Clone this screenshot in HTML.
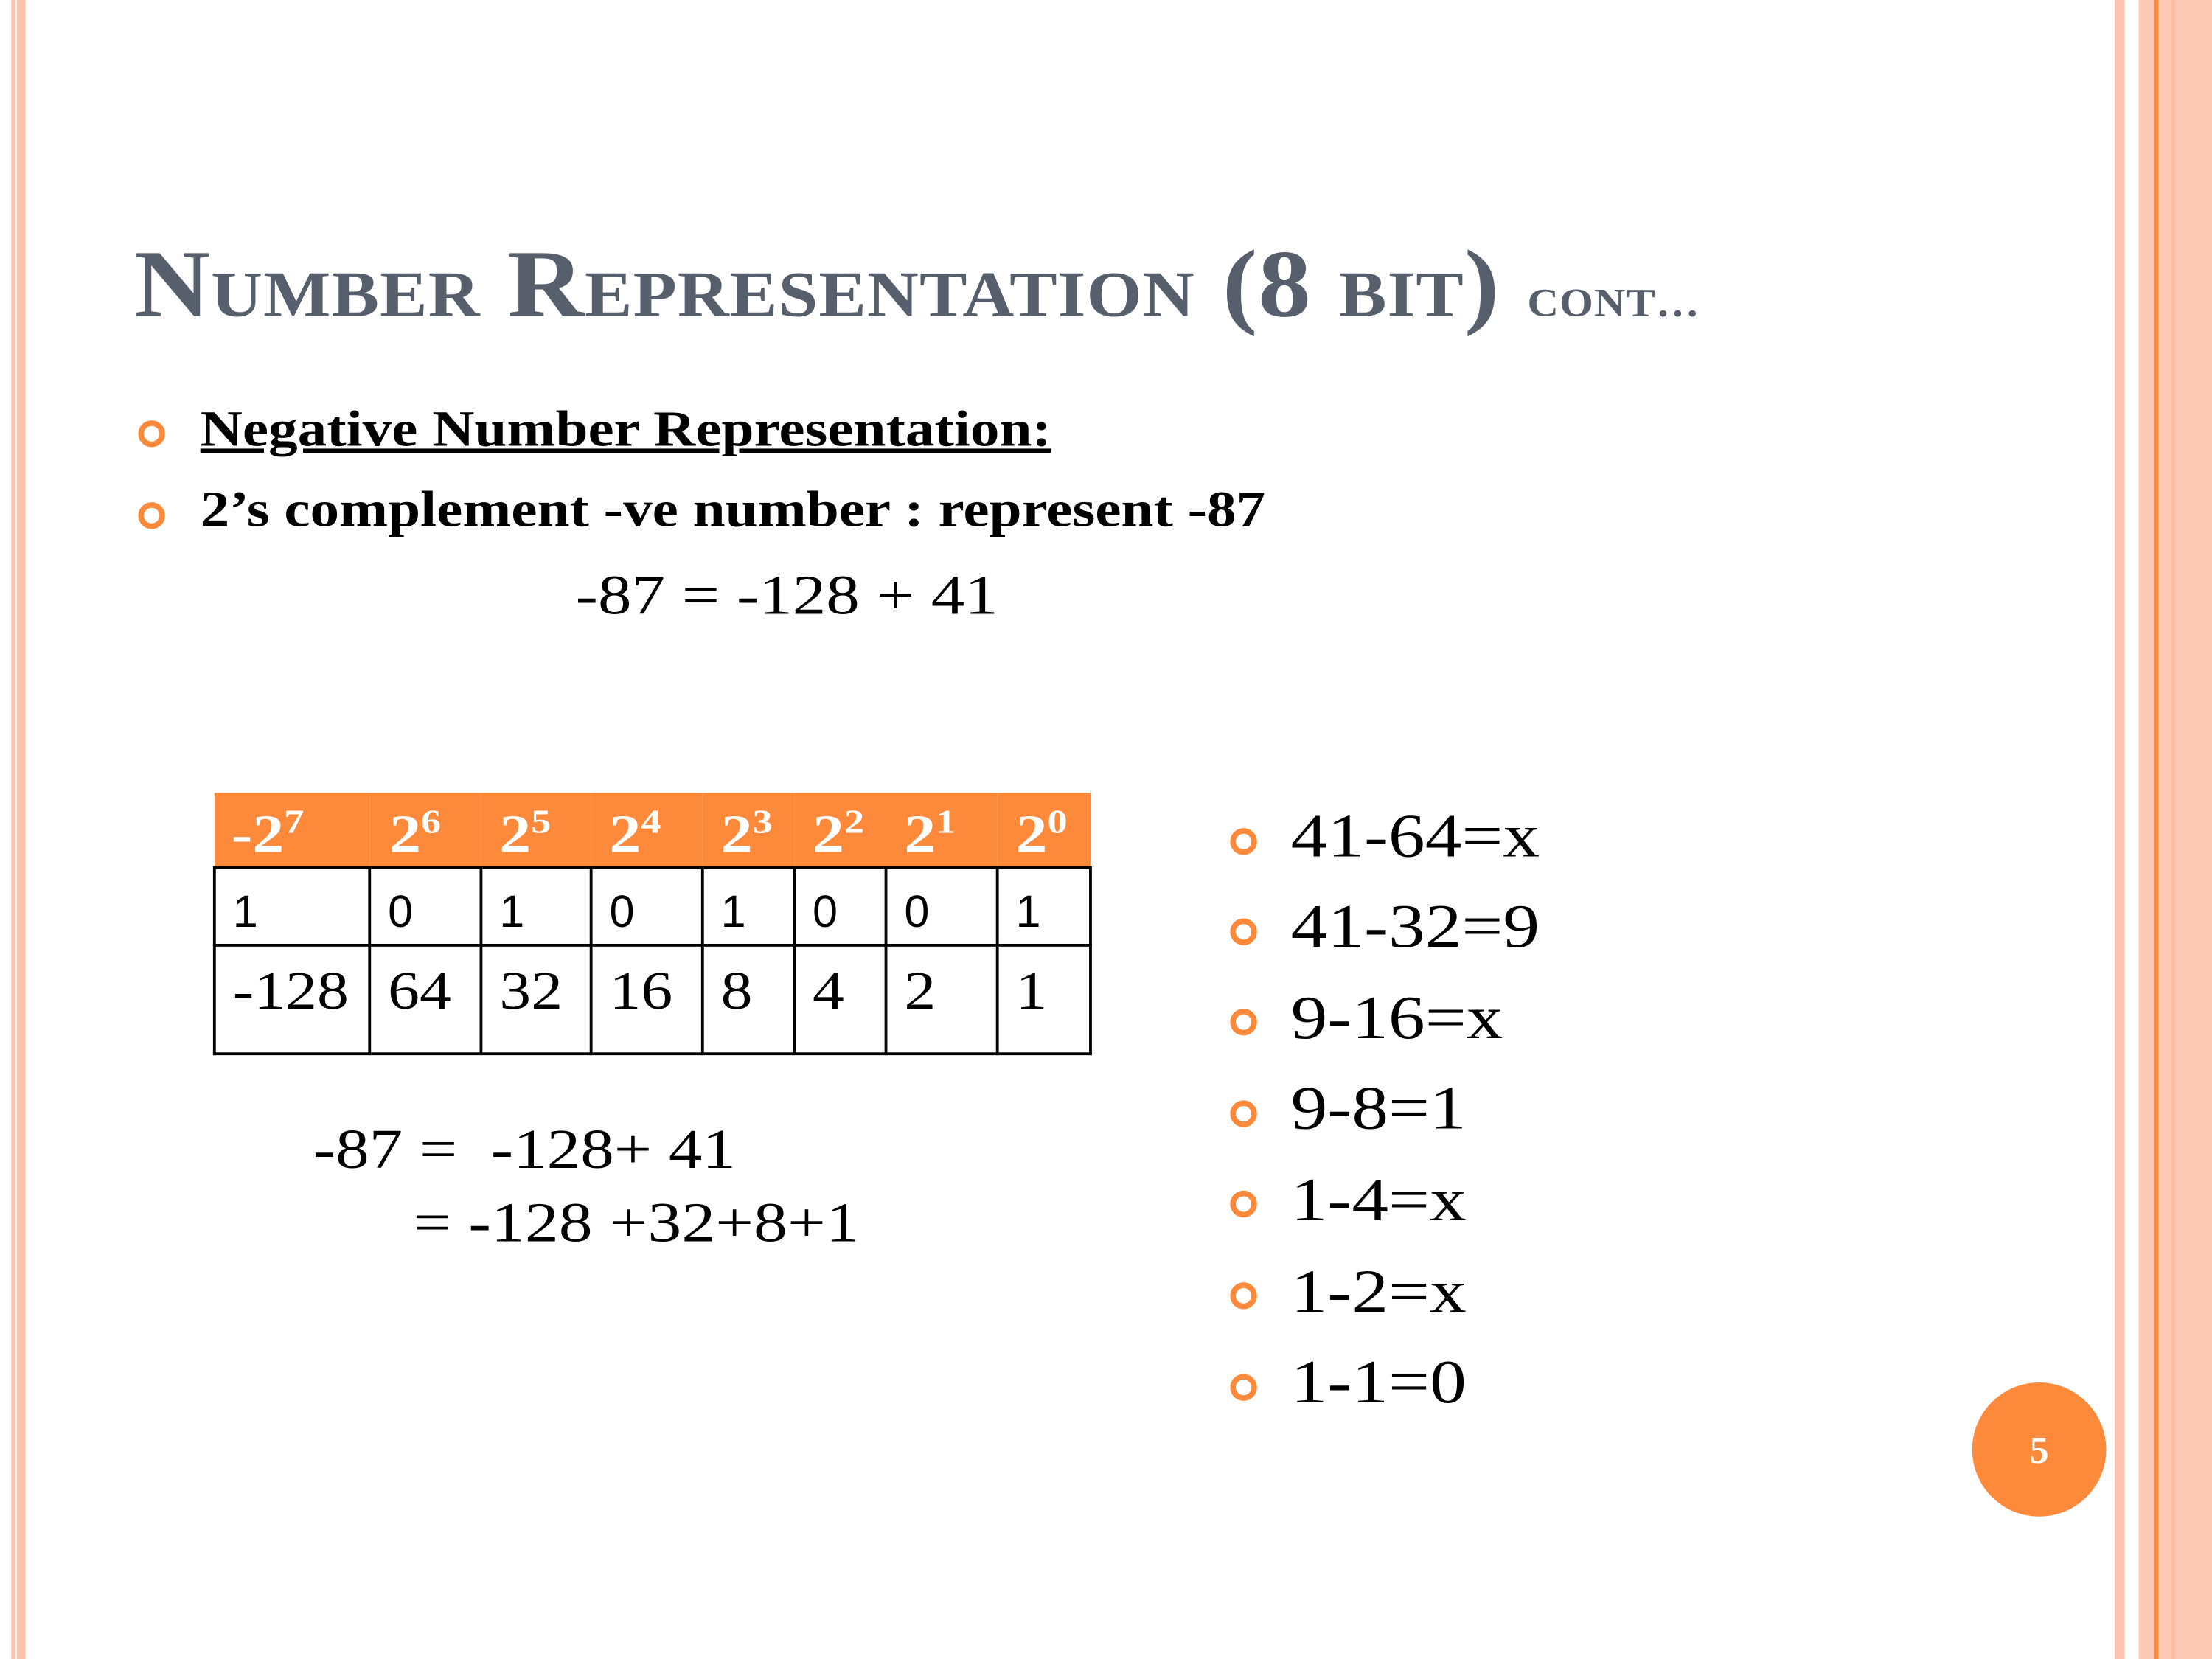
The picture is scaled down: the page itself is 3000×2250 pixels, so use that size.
<!DOCTYPE html>
<html><head><meta charset="utf-8"><style>
html,body{margin:0;padding:0;background:#fff;overflow:hidden;width:3000px;height:2250px}
#s{position:absolute;left:0;top:0;width:1568px;height:1176px;transform:scale(1.91327);transform-origin:0 0;font-family:"Liberation Serif",serif}
.a{position:absolute}
.t{position:absolute;white-space:nowrap;line-height:1;transform-origin:0 0}
.ring{position:absolute;width:11px;height:11px;border:4px solid #fd8a3b;border-radius:50%}
td{border:2px solid #000;padding:0 0 0 12px;vertical-align:middle;overflow:visible;white-space:nowrap}
.w{display:inline-block;transform:scaleX(1.18);transform-origin:0 0}
</style></head><body><div id="s">
<div class="a" style="left:8px;top:0;width:3px;height:1176px;background:#fdc1ab"></div>
<div class="a" style="left:12px;top:0;width:6px;height:1176px;background:#fdc1ab"></div>
<div class="a" style="left:1499px;top:0;width:7px;height:1176px;background:#fdc5b0"></div>
<div class="a" style="left:1516px;top:0;width:52px;height:1176px;background:#fdcab6"></div>
<div class="a" style="left:1527px;top:0;width:2.5px;height:1176px;background:#fd8a3b"></div>
<div class="a" style="left:1539px;top:0;width:3px;height:1176px;background:#fdbb9f"></div>

<div class="t" style="left:95px;top:167px;color:#575f6d;font-weight:bold;font-size:68px;letter-spacing:0.5px;transform:scaleX(1.1)">N<span style="font-size:46px">UMBER</span> R<span style="font-size:46px">EPRESENTATION</span> (8 <span style="font-size:46px">BIT</span>) <span style="font-size:28px">CONT…</span></div>

<div class="ring" style="left:98px;top:298px"></div>
<div class="ring" style="left:98px;top:356px"></div>
<div class="t" style="left:142px;top:286px;font-size:36px;font-weight:bold;text-decoration:underline;transform:scaleX(1.15)">Negative Number Representation:</div>
<div class="t" style="left:142px;top:343px;font-size:36px;font-weight:bold;transform:scaleX(1.15)">2’s complement -ve number : represent -87</div>
<div class="t" style="left:408px;top:402px;font-size:40px;transform:scaleX(1.19)">-87 = -128 + 41</div>

<table class="a" style="left:151px;top:562px;border-collapse:collapse;width:621px;table-layout:fixed;font-size:34px">
<colgroup><col style="width:110px"><col style="width:79px"><col style="width:78px"><col style="width:79px"><col style="width:65px"><col style="width:65px"><col style="width:79px"><col style="width:66px"></colgroup>
<tr style="height:52px;background:#fd8a3b;color:#fff;font-weight:bold;font-size:38px">
<td style="border:none;border-bottom:2px solid #000;padding-top:8px"><span class="w">-2<sup style="font-size:24px">7</sup></span></td>
<td style="border:none;border-bottom:2px solid #000;padding-left:14px;padding-top:8px"><span class="w">2<sup style="font-size:24px">6</sup></span></td>
<td style="border:none;border-bottom:2px solid #000;padding-left:13px;padding-top:8px"><span class="w">2<sup style="font-size:24px">5</sup></span></td>
<td style="border:none;border-bottom:2px solid #000;padding-left:13px;padding-top:8px"><span class="w">2<sup style="font-size:24px">4</sup></span></td>
<td style="border:none;border-bottom:2px solid #000;padding-left:13px;padding-top:8px"><span class="w">2<sup style="font-size:24px">3</sup></span></td>
<td style="border:none;border-bottom:2px solid #000;padding-left:13px;padding-top:8px"><span class="w">2<sup style="font-size:24px">2</sup></span></td>
<td style="border:none;border-bottom:2px solid #000;padding-left:13px;padding-top:8px"><span class="w">2<sup style="font-size:24px">1</sup></span></td>
<td style="border:none;border-bottom:2px solid #000;padding-left:13px;padding-top:8px"><span class="w">2<sup style="font-size:24px">0</sup></span></td></tr>
<tr style="height:55px;font-family:'Liberation Sans',sans-serif;font-size:32px"><td style="padding-top:8px">1</td><td style="padding-top:8px">0</td><td style="padding-top:8px">1</td><td style="padding-top:8px">0</td><td style="padding-top:8px">1</td><td style="padding-top:8px">0</td><td style="padding-top:8px">0</td><td style="padding-top:8px">1</td></tr>
<tr style="height:77px;font-size:38px"><td style="vertical-align:top;padding-top:10px"><span class="w">-128</span></td><td style="vertical-align:top;padding-top:10px"><span class="w">64</span></td><td style="vertical-align:top;padding-top:10px"><span class="w">32</span></td><td style="vertical-align:top;padding-top:10px"><span class="w">16</span></td><td style="vertical-align:top;padding-top:10px"><span class="w">8</span></td><td style="vertical-align:top;padding-top:10px"><span class="w">4</span></td><td style="vertical-align:top;padding-top:10px"><span class="w">2</span></td><td style="vertical-align:top;padding-top:10px"><span class="w">1</span></td></tr>
</table>

<div class="t" style="left:222px;top:795px;font-size:40px;transform:scaleX(1.19)">-87 = &nbsp;-128+ 41</div>
<div class="t" style="left:293px;top:847px;font-size:40px;transform:scaleX(1.2)">= -128 +32+8+1</div>

<div class="ring" style="left:872px;top:587px"></div>
<div class="ring" style="left:872px;top:651px"></div>
<div class="ring" style="left:872px;top:715px"></div>
<div class="ring" style="left:872px;top:780px"></div>
<div class="ring" style="left:872px;top:844px"></div>
<div class="ring" style="left:872px;top:909px"></div>
<div class="ring" style="left:872px;top:974px"></div>
<div class="t" style="left:915px;top:571px;font-size:44px;transform:scaleX(1.18)">41-64=x</div>
<div class="t" style="left:915px;top:635px;font-size:44px;transform:scaleX(1.18)">41-32=9</div>
<div class="t" style="left:915px;top:700px;font-size:44px;transform:scaleX(1.18)">9-16=x</div>
<div class="t" style="left:915px;top:764px;font-size:44px;transform:scaleX(1.18)">9-8=1</div>
<div class="t" style="left:915px;top:829px;font-size:44px;transform:scaleX(1.18)">1-4=x</div>
<div class="t" style="left:915px;top:894px;font-size:44px;transform:scaleX(1.18)">1-2=x</div>
<div class="t" style="left:915px;top:958px;font-size:44px;transform:scaleX(1.18)">1-1=0</div>

<div class="a" style="left:1398px;top:980px;width:95px;height:95px;border-radius:50%;background:#fd8a3b"></div>
<div class="t" style="left:1398px;top:1015px;width:95px;text-align:center;color:#fff;font-weight:bold;font-size:27px">5</div>
</div></body></html>
